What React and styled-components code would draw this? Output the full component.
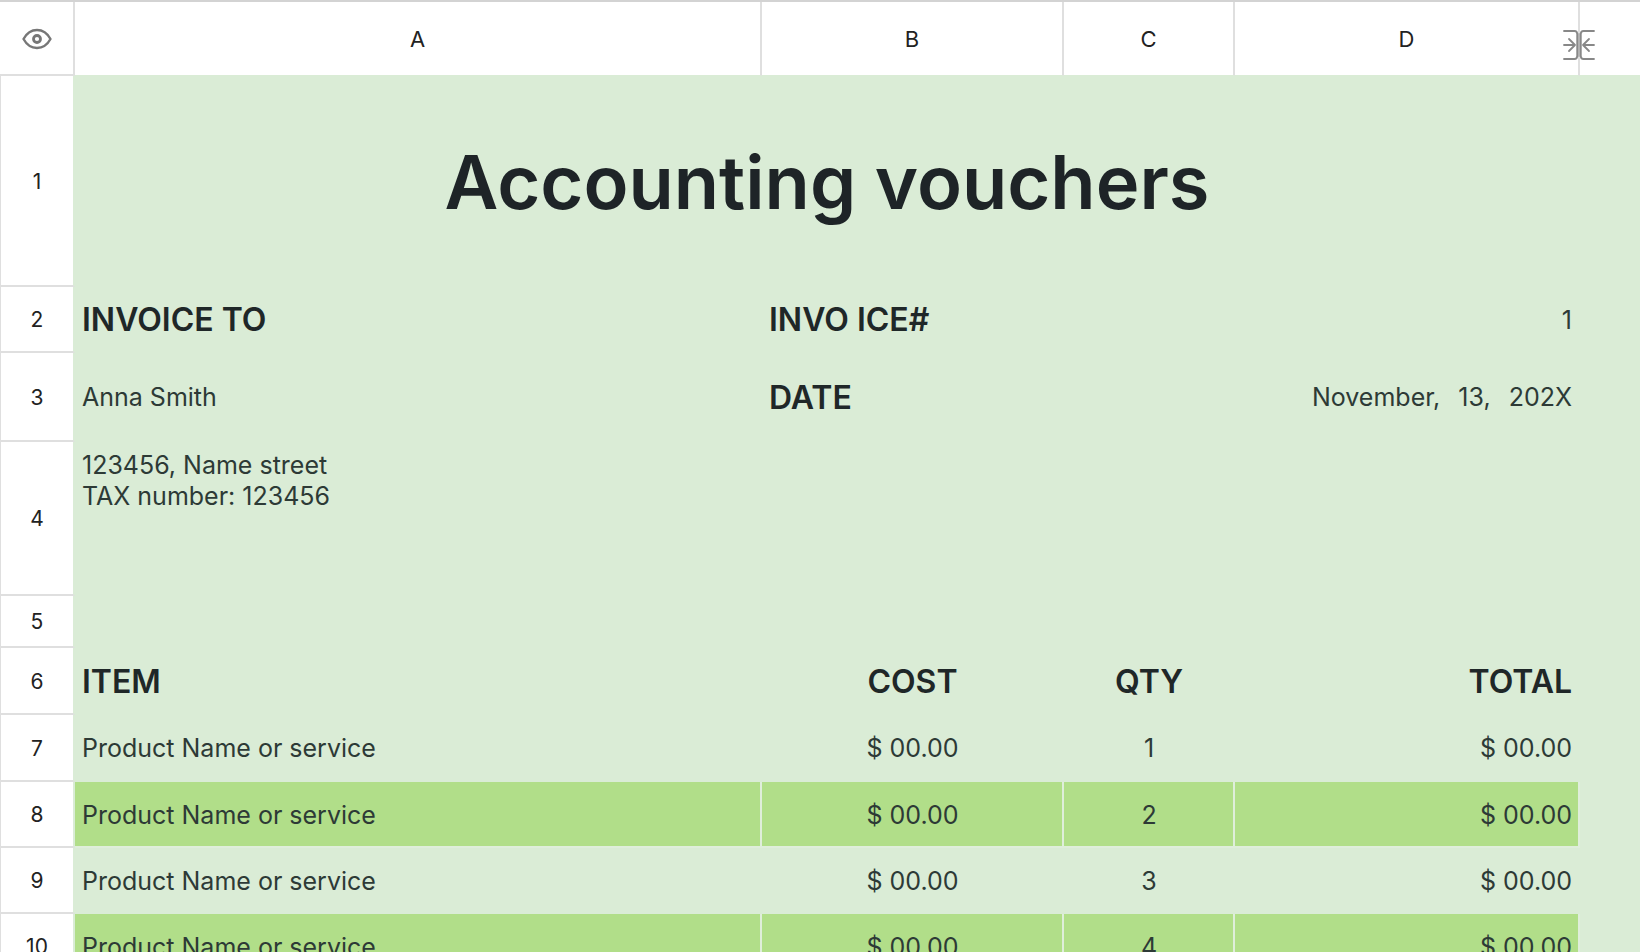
import React from "react";
import styled, { createGlobalStyle } from "styled-components";

const mint = "#daecd6";
const mintLine = "#dfeedb";
const leaf = "#b1de89";
const line = "#dfdfdf";

const GlobalStyle = createGlobalStyle`
  *, *::before, *::after { box-sizing: border-box; }
  body {
    margin: 0;
    background: ${mint};
    font-family: Inter, "Liberation Sans", sans-serif;
    color: #2d3a36;
  }
`;

const Page = styled.main`
  height: 100vh;
  overflow: hidden;
  background: ${mint};
`;

const Sheet = styled.table`
  width: 100%;
  table-layout: fixed;
  border-collapse: separate;
  border-spacing: 0;
  border-top: 2px solid #d3d3d3;
`;

const Column = styled.col`
  width: ${(p) => p.$width};
`;

const Corner = styled.td`
  height: 74px;
  padding: 2px 0 0;
  background: #fff;
  border-right: 2px solid ${line};
  border-bottom: 2px solid ${line};
  text-align: center;
  vertical-align: middle;
`;

const ColumnHead = styled.th`
  position: relative;
  padding: 0;
  background: #fff;
  border-right: ${(p) => (p.$last ? "0" : `2px solid ${line}`)};
  border-bottom: 1px solid ${mint};
  color: #222;
  font-size: 22px;
  font-weight: 400;
  line-height: 28px;
  text-align: center;
`;

const RowHead = styled.th`
  height: ${(p) => p.$height}px;
  padding: 2px 0 0;
  background: #fff;
  border-left: 1px solid ${line};
  border-right: 2px solid ${mint};
  border-bottom: 2px solid ${line};
  color: #222;
  font-size: 21px;
  font-weight: 400;
  line-height: 28px;
  text-align: center;
`;

const Cell = styled.td`
  padding: ${(p) => (p.$top ? "8px" : "2px")} 6px 0 7px;
  background: ${(p) => (p.$shaded ? leaf : mint)};
  border-right: 2px solid ${(p) => (p.$shaded ? mintLine : mint)};
  border-bottom: 2px solid ${(p) => (p.$shaded ? mintLine : mint)};
  font-size: 25px;
  line-height: 31px;
  text-align: ${(p) => p.$align || "left"};
  vertical-align: ${(p) => (p.$top ? "top" : "middle")};
  white-space: pre-wrap;
`;

const LabelCell = styled(Cell)`
  color: #1f2728;
  font-size: 32px;
  font-weight: 600;
  line-height: 40px;
`;

const TitleCell = styled(Cell)`
  color: #1e2427;
`;

const Title = styled.h1`
  margin: 0;
  font-size: 74px;
  font-weight: 600;
  line-height: 92px;
`;

const DatePart = styled.span`
  margin-left: 4px;
`;

const IconButton = styled.button`
  display: inline-flex;
  padding: 0;
  border: 0;
  background: none;
  color: #777;
  cursor: pointer;
  vertical-align: middle;
`;

const CollapseButton = styled(IconButton)`
  position: absolute;
  top: 27px;
  right: -17px;
  color: #888;
  z-index: 1;
`;

function EyeIcon() {
  return (
    <svg width="30" height="22" viewBox="0 0 30 22" fill="none" stroke="currentColor" strokeWidth="2.400" strokeLinejoin="round">
      <path d="M1.500 11C4.800 5 9.600 2 15 2S25.200 5 28.500 11C25.200 17 20.400 20 15 20S4.800 17 1.500 11Z" />
      <circle cx="15" cy="11" r="3.500" strokeWidth="2.800" />
    </svg>
  );
}

function CollapseIcon() {
  return (
    <svg width="32" height="32" viewBox="0 0 32 32" fill="none" stroke="currentColor" strokeWidth="1.800" strokeLinecap="round" strokeLinejoin="round">
      <path d="M1 2H11.500Q14.200 2 14.200 5V27Q14.200 30 11.500 30H1" />
      <path d="M31 2H20.500Q17.800 2 17.800 5V27Q17.800 30 20.500 30H31" />
      <path d="M16 5V27" strokeWidth="2" stroke="#b0b0b0" />
      <path d="M1 16H12M6 10L12 16L6 22" />
      <path d="M31 16H20M26 10L20 16L26 22" />
    </svg>
  );
}

const items = [
  { row: 7, qty: 1, height: 67 },
  { row: 8, qty: 2, height: 66, shaded: true },
  { row: 9, qty: 3, height: 66 },
  { row: 10, qty: 4, height: 66, shaded: true },
];

function Head({ row, height }) {
  return <RowHead scope="row" $height={height}>{row}</RowHead>;
}

export default function App() {
  return (
    <Page>
      <GlobalStyle />
      <Sheet>
        <colgroup>
          <Column $width="75px" />
          <Column $width="auto" />
          <Column $width="302px" />
          <Column $width="171px" />
          <Column $width="345px" />
          <Column $width="60px" />
        </colgroup>
        <thead>
          <tr>
            <Corner>
              <IconButton type="button" aria-label="Toggle visibility"><EyeIcon /></IconButton>
            </Corner>
            <ColumnHead scope="col">A</ColumnHead>
            <ColumnHead scope="col">B</ColumnHead>
            <ColumnHead scope="col">C</ColumnHead>
            <ColumnHead scope="col">
              D
              <CollapseButton type="button" aria-label="Resize column D"><CollapseIcon /></CollapseButton>
            </ColumnHead>
            <ColumnHead $last />
          </tr>
        </thead>
        <tbody>
          <tr>
            <Head row={1} height={211} />
            <TitleCell colSpan={4} $align="center"><Title>Accounting vouchers</Title></TitleCell>
            <td />
          </tr>
          <tr>
            <Head row={2} height={66} />
            <LabelCell>INVOICE TO</LabelCell>
            <LabelCell colSpan={2}>INVO ICE#</LabelCell>
            <Cell $align="right">1</Cell>
            <td />
          </tr>
          <tr>
            <Head row={3} height={89} />
            <Cell>Anna Smith</Cell>
            <LabelCell colSpan={2}>DATE</LabelCell>
            <Cell $align="right">
              {"November,  "}
              <DatePart>{"13,  "}</DatePart>
              <DatePart>202X</DatePart>
            </Cell>
            <td />
          </tr>
          <tr>
            <Head row={4} height={154} />
            <Cell $top>{"123456, Name street\nTAX number: 123456"}</Cell>
            <Cell /><Cell /><Cell />
            <td />
          </tr>
          <tr>
            <Head row={5} height={52} />
            <Cell /><Cell /><Cell /><Cell />
            <td />
          </tr>
          <tr>
            <Head row={6} height={67} />
            <LabelCell>ITEM</LabelCell>
            <LabelCell $align="center">COST</LabelCell>
            <LabelCell $align="center">QTY</LabelCell>
            <LabelCell $align="right">TOTAL</LabelCell>
            <td />
          </tr>
          {items.map(({ row, qty, height, shaded }) => (
            <tr key={row}>
              <Head row={row} height={height} />
              <Cell $shaded={shaded}>Product Name or service</Cell>
              <Cell $shaded={shaded} $align="center">$ 00.00</Cell>
              <Cell $shaded={shaded} $align="center">{qty}</Cell>
              <Cell $shaded={shaded} $align="right">$ 00.00</Cell>
              <td />
            </tr>
          ))}
        </tbody>
      </Sheet>
    </Page>
  );
}
